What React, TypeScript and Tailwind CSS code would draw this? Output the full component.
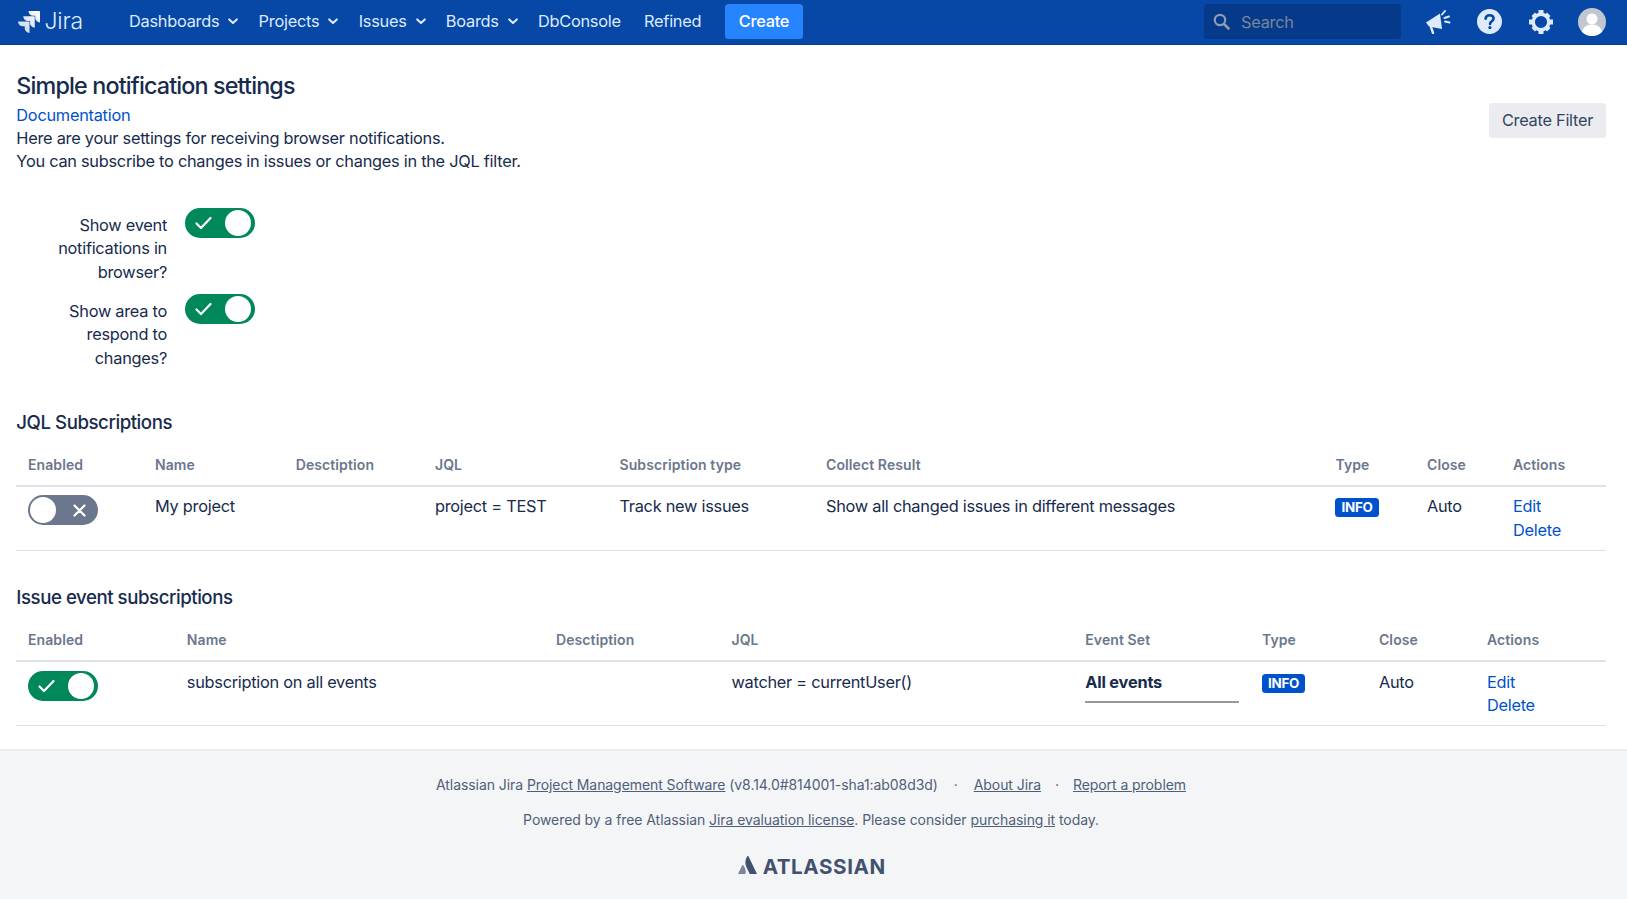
import React from "react";

const Toggle = ({ on }: { on: boolean }) =>
  on ? (
    <span className="flex h-[30px] w-[70px] items-center justify-between rounded-full bg-[#00875a] pl-[10px] pr-[3.5px]">
      <svg width="17" height="14" viewBox="0 0 17 14" fill="none">
        <path d="M1.5 7.5 L6 12 L15.5 2" stroke="#fff" strokeWidth="2.2" strokeLinecap="round" strokeLinejoin="round" />
      </svg>
      <span className="h-[26px] w-[26px] rounded-full bg-white" />
    </span>
  ) : (
    <span className="flex h-[30px] w-[70px] items-center justify-between rounded-full bg-[#6b778c] pl-[2px] pr-[12px]">
      <span className="h-[26px] w-[26px] rounded-full bg-white" />
      <svg width="13" height="13" viewBox="0 0 13 13" fill="none">
        <path d="M1.5 1.5 L11.5 11.5 M11.5 1.5 L1.5 11.5" stroke="#fff" strokeWidth="2.2" strokeLinecap="round" />
      </svg>
    </span>
  );

const Chevron = () => (
  <svg width="10" height="7" viewBox="0 0 10 7" fill="none" className="ml-[9px] mr-[-3px] mt-[2px]">
    <path d="M1.2 1.4 L5 5 L8.8 1.4" stroke="#deebff" strokeWidth="2" strokeLinecap="round" strokeLinejoin="round" />
  </svg>
);

const NavItem = ({ label, menu }: { label: string; menu?: boolean }) => (
  <a className="flex h-full items-center px-[11.67px] pb-[2px] text-[16.33px] tracking-[-0.25px] text-[#deebff]">
    {label}
    {menu && <Chevron />}
  </a>
);

const Lozenge = () => (
  <span className="inline-block rounded-[3.5px] bg-[#0052cc] px-[6px] text-[13.4px] font-bold leading-[19px] text-white">INFO</span>
);

const Th = ({ children }: { children?: React.ReactNode }) => (
  <th className="border-b-[2.33px] border-[#dfe1e6] px-[11.67px] pb-[11.3px] pt-[8px] text-left text-[14px] font-semibold leading-[16.8px] tracking-[0.1px] text-[#6b778c]">
    {children}
  </th>
);

const Td = ({ children }: { children?: React.ReactNode }) => (
  <td className="border-b border-[#dfe1e6] px-[11.67px] pb-[8px] pt-[8.5px] align-top text-[16.33px] leading-[23.33px] text-[#172b4d]">
    {children}
  </td>
);

const Actions = () => (
  <div className="flex flex-col text-[#0052cc]">
    <a>Edit</a>
    <a>Delete</a>
  </div>
);

export default function App() {
  return (
    <div className="flex min-h-screen flex-col bg-white font-['Inter',sans-serif] tracking-[-0.26px] text-[#172b4d]">
      <header className="flex h-[44.5px] items-center border-b border-[#053f94] bg-[#0747a6] pl-[17.5px] pr-[21px]">
        <div className="flex w-[99.8px] items-center">
          <svg width="22" height="22" viewBox="0 0 24 24" className="mr-[5px]">
            <defs>
              <linearGradient id="jm" x1="1" y1="0" x2="0" y2="1">
                <stop offset="0" stopColor="#ffffff" />
                <stop offset="1" stopColor="#ffffff" stopOpacity="0.75" />
              </linearGradient>
            </defs>
            <path
              fill="url(#jm)"
              d="M11.571 11.513H0a5.218 5.218 0 0 0 5.232 5.215h2.13v2.057A5.215 5.215 0 0 0 12.575 24V12.518a1.005 1.005 0 0 0-1.005-1.005zm5.723-5.756H5.736a5.215 5.215 0 0 0 5.215 5.214h2.129v2.058a5.218 5.218 0 0 0 5.215 5.214V6.758a1.001 1.001 0 0 0-1.001-1.001zM23.013 0H11.455a5.215 5.215 0 0 0 5.215 5.215h2.129v2.057A5.215 5.215 0 0 0 24 12.483V1.005A1.001 1.001 0 0 0 23.013 0Z"
            />
          </svg>
          <span className="text-[23px] font-light leading-none tracking-[-0.2px] text-[#deebff]">Jira</span>
        </div>
        <nav className="flex h-full items-center">
          <NavItem label="Dashboards" menu />
          <NavItem label="Projects" menu />
          <NavItem label="Issues" menu />
          <NavItem label="Boards" menu />
          <NavItem label="DbConsole" />
          <NavItem label="Refined" />
        </nav>
        <button className="ml-[12px] h-[35px] w-[78px] rounded-[3.5px] bg-[#2684ff] pb-[1px] text-[16.33px] font-medium text-white">Create</button>
        <div className="ml-auto flex h-[35px] w-[197px] items-center gap-[11px] rounded-[3.5px] bg-[#053a8a] pl-[9px]">
          <svg width="17" height="17" viewBox="0 0 17 17" fill="none">
            <circle cx="7" cy="7" r="5.2" stroke="#8d9bb3" strokeWidth="2.2" />
            <path d="M11 11 L15.5 15.5" stroke="#8d9bb3" strokeWidth="2.6" strokeLinecap="round" />
          </svg>
          <span className="text-[16.33px] text-[#7a869a]">Search</span>
        </div>
        <div className="ml-[24px] flex items-center">
          <svg width="26" height="24" viewBox="0 0 26 24" fill="none" className="mr-[26px]">
            <path d="M1 12.5 L15 3.5 L17 19 L4 16.5 Z" fill="#deebff" />
            <path d="M6 17 L8 23" stroke="#deebff" strokeWidth="2.4" strokeLinecap="round" />
            <path d="M17 4.5 L20 1 M19.5 8 L24 6.5 M20 11.5 L24.5 12.5" stroke="#deebff" strokeWidth="1.9" strokeLinecap="round" />
          </svg>
          <svg width="25" height="25" viewBox="0 0 25 25" className="mr-[26px]">
            <circle cx="12.5" cy="12.5" r="12.5" fill="#deebff" />
            <path d="M8.6 9.6 C8.8 7.4 10.4 6.2 12.6 6.2 C15 6.2 16.6 7.6 16.6 9.6 C16.6 12.2 13 12.4 13 15" stroke="#0747a6" strokeWidth="2.6" fill="none" strokeLinecap="round" />
            <circle cx="12.9" cy="18.6" r="1.6" fill="#0747a6" />
          </svg>
          <svg width="26" height="26" viewBox="0 0 26 26" fill="none" className="mr-[24px]">
            <circle cx="13" cy="13" r="7.8" stroke="#deebff" strokeWidth="3.4" />
            <path
              fill="#deebff"
              d="M10.5 1h5v4.5h-5z M10.5 20.5h5V25h-5z M1 10.5h4.5v5H1z M20.5 10.5H25v5h-4.5z M3.5 7l3.5-3.5 3.2 3.2-3.5 3.5z M19 3.5L22.5 7l-3.2 3.2-3.5-3.5z M3.5 19l3.2-3.2 3.5 3.5L7 22.5z M19.3 15.8l3.2 3.2-3.5 3.5-3.2-3.2z"
            />
          </svg>
          <svg width="28" height="28" viewBox="0 0 28 28">
            <clipPath id="av"><circle cx="14" cy="14" r="14" /></clipPath>
            <g clipPath="url(#av)">
              <rect width="28" height="28" fill="#c1c7d0" />
              <circle cx="14" cy="11" r="5.5" fill="#fff" />
              <ellipse cx="14" cy="24" rx="10" ry="7.5" fill="#fff" />
            </g>
          </svg>
        </div>
      </header>

      <main className="pb-[22.5px] pl-[16.33px] pr-[21px] pt-[27.5px]">
        <div className="flex items-start justify-between">
          <div>
            <h1 className="text-[23.33px] font-medium leading-[28px] tracking-[-0.85px]">Simple notification settings</h1>
            <div className="mt-[3.5px] text-[16.33px] leading-[23.33px]">
              <a className="block text-[#0052cc]">Documentation</a>
              <p>Here are your settings for receiving browser notifications.</p>
              <p>You can subscribe to changes in issues or changes in the JQL filter.</p>
            </div>
          </div>
          <button className="mt-[31px] h-[35px] w-[117px] rounded-[3.5px] bg-[#ebecf0] text-[16.33px] text-[#344563]">Create Filter</button>
        </div>

        <div className="mt-[34.5px] flex flex-col gap-[9.7px] text-[16.33px] leading-[23.5px]">
          <div className="flex items-start gap-[18px]">
            <label className="w-[150.67px] pt-[5.8px] text-right">Show event notifications in browser?</label>
            <Toggle on />
          </div>
          <div className="flex items-start gap-[18px]">
            <label className="w-[150.67px] pt-[5.8px] text-right">Show area to respond to changes?</label>
            <Toggle on />
          </div>
        </div>

        <h2 className="mb-[12px] mt-[38.5px] text-[18.67px] font-medium leading-[28px] tracking-[-0.46px]">JQL Subscriptions</h2>
        <table className="w-full table-fixed border-separate border-spacing-0">
          <colgroup>
            <col className="w-[127px]" />
            <col className="w-[140.7px]" />
            <col className="w-[139.3px]" />
            <col className="w-[184.5px]" />
            <col className="w-[206.5px]" />
            <col className="w-[509.5px]" />
            <col className="w-[91.5px]" />
            <col className="w-[86px]" />
            <col />
          </colgroup>
          <thead>
            <tr>
              <Th>Enabled</Th>
              <Th>Name</Th>
              <Th>Desctiption</Th>
              <Th>JQL</Th>
              <Th>Subscription type</Th>
              <Th>Collect Result</Th>
              <Th>Type</Th>
              <Th>Close</Th>
              <Th>Actions</Th>
            </tr>
          </thead>
          <tbody>
            <tr>
              <Td><Toggle on={false} /></Td>
              <Td>My project</Td>
              <Td />
              <Td>project = TEST</Td>
              <Td>Track new issues</Td>
              <Td>Show all changed issues in different messages</Td>
              <Td><Lozenge /></Td>
              <Td>Auto</Td>
              <Td><Actions /></Td>
            </tr>
          </tbody>
        </table>

        <h2 className="mb-[12.5px] mt-[32.5px] text-[18.67px] font-medium leading-[28px] tracking-[-0.46px]">Issue event subscriptions</h2>
        <table className="w-full table-fixed border-separate border-spacing-0">
          <colgroup>
            <col className="w-[158.8px]" />
            <col className="w-[369.2px]" />
            <col className="w-[175.5px]" />
            <col className="w-[353.8px]" />
            <col className="w-[176.7px]" />
            <col className="w-[117px]" />
            <col className="w-[108px]" />
            <col />
          </colgroup>
          <thead>
            <tr>
              <Th>Enabled</Th>
              <Th>Name</Th>
              <Th>Desctiption</Th>
              <Th>JQL</Th>
              <Th>Event Set</Th>
              <Th>Type</Th>
              <Th>Close</Th>
              <Th>Actions</Th>
            </tr>
          </thead>
          <tbody>
            <tr>
              <Td><Toggle on /></Td>
              <Td>subscription on all events</Td>
              <Td />
              <Td>watcher = currentUser()</Td>
              <Td>
                <div className="border-b-2 border-[#999] pb-[7.5px] font-bold tracking-[-0.2px]">All events</div>
              </Td>
              <Td><Lozenge /></Td>
              <Td>Auto</Td>
              <Td><Actions /></Td>
            </tr>
          </tbody>
        </table>
      </main>

      <footer className="flex flex-1 flex-col items-center border-t-2 border-[#ebecf0] bg-[#f4f5f7] pr-[5px] pt-[24px] text-[14px] leading-[19px] tracking-[-0.07px] text-[#505f79]">
        <p>
          Atlassian Jira <a className="underline">Project Management Software</a> (v8.14.0#814001-sha1:ab08d3d)
          <span className="px-[16px]">·</span>
          <a className="underline">About Jira</a>
          <span className="px-[14px]">·</span>
          <a className="underline">Report a problem</a>
        </p>
        <p className="mt-[16px]">
          Powered by a free Atlassian <a className="underline">Jira evaluation license</a>. Please consider <a className="underline">purchasing it</a> today.
        </p>
        <div className="ml-[1.5px] mt-[24.2px] flex items-center gap-[6px]">
          <svg width="19" height="18" viewBox="0 0 19 18">
            <path d="M5.5 9.5 C5 9 4.4 9 4.1 9.6 L0 18 H7.4 C8.2 15 7.4 12 5.5 9.5 Z" fill="#7a869a" />
            <path d="M9.4 0 C7 4 6.8 8 8.6 11.6 L11.8 18 H19 L10.3 0 C10 -0.2 9.6 -0.2 9.4 0 Z" fill="#42526e" />
          </svg>
          <span className="pt-[4px] text-[20.6px] font-bold leading-none tracking-[0.6px] text-[#42526e]">ATLASSIAN</span>
        </div>
      </footer>
    </div>
  );
}
